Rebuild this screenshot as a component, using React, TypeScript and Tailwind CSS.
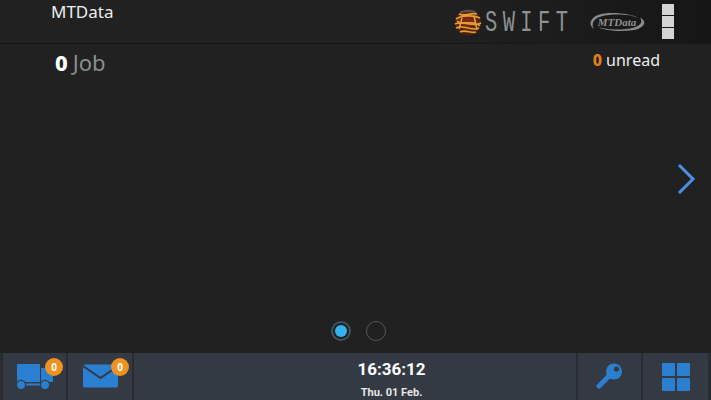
const font = { fontFamily: '"Noto Sans", "Open Sans", sans-serif' };

function Globe() {
  return (
    <svg width="28" height="27" viewBox="0 0 28 27">
      <defs>
        <radialGradient id="g" cx="50%" cy="45%" r="55%">
          <stop offset="0%" stopColor="#8c2a14" />
          <stop offset="100%" stopColor="#4a1c12" />
        </radialGradient>
      </defs>
      <circle cx="14" cy="13.5" r="13" fill="url(#g)" />
      <path d="M2 10 C8 6 20 6 26 9 M1 15 C8 11 20 19 27 14 M2 19 C9 15 19 23 25 19 M5 5 C10 8 18 3 23 5 M6 23 C11 20 18 25 22 23 M3 12 C9 17 19 10 26 17 M8 9 L5 20 M20 7 L23 21" fill="none" stroke="#e0a030" strokeWidth="1.6" />
      <path d="M6 3.5 C11 1 18 1 22 3.5" fill="none" stroke="#55524a" strokeWidth="2" />
    </svg>
  );
}

function MtLogo() {
  return (
    <div className="relative w-[58px] h-[22px] flex items-center justify-center">
      <svg width="58" height="22" viewBox="0 0 58 22" className="absolute inset-0">
        <path d="M10 4 C2 7 0 14 6 18 C3 13 5 8 13 5.5 C24 2.5 42 3 50 7 C45 3 22 0 10 4 Z" fill="#8a8a8a" />
        <path d="M50 18 C57 15 59 10 52 6.5 C55 11 53 14 46 16.5 C36 19.5 18 19 10 16 C16 20 38 21.5 50 18 Z" fill="#8a8a8a" />
      </svg>
      <span className="relative text-[11px] leading-none italic font-bold text-[#8f8f8f]" style={{ fontFamily: '"Liberation Serif", serif' }}>MTData</span>
    </div>
  );
}

function Badge() {
  return (
    <span className="absolute w-[18px] h-[18px] rounded-full bg-[#ee9220] flex items-center justify-center text-[10px] leading-none font-bold text-white">0</span>
  );
}

function Cell({ className, children }: { className: string; children: React.ReactNode }) {
  return <div className={`relative h-full bg-[#343a44] flex items-center justify-center ${className}`}>{children}</div>;
}

export default function App() {
  return (
    <div className="w-[711px] h-[400px] bg-[#212121] flex flex-col overflow-hidden" style={font}>
      <header className="h-[44px] shrink-0 border-b border-[#191919] flex bg-gradient-to-r from-[#212121] from-60% to-[#161616]">
        <div className="pl-[51px] pt-[1px] text-[17px] leading-[22px] text-[#eeeeee] w-[453px]">MTData</div>
        <div className="flex-1 flex items-start">
          <div className="mt-[9px] ml-[1px]"><Globe /></div>
          <span className="mt-[6px] ml-[3px] w-[102px] text-[30px] leading-[34px] tracking-[8px] text-[#8e9294] whitespace-nowrap" style={{ fontFamily: '"Liberation Mono", monospace', transform: 'scaleX(0.68)', transformOrigin: 'left' }}>SWIFT</span>
          <div className="mt-[11px] ml-[1px]"><MtLogo /></div>
          <div className="ml-[16px] mt-[4px] flex flex-col gap-[1px]">
            <div className="w-[12px] h-[11px] bg-[#d4d4d4]" />
            <div className="w-[12px] h-[11px] bg-[#d4d4d4]" />
            <div className="w-[12px] h-[11px] bg-[#d4d4d4]" />
          </div>
        </div>
      </header>
      <main className="flex-1 relative flex flex-col">
        <div className="flex justify-between items-start">
          <div className="pl-[55px] pt-[4px] text-[22px] leading-[28px] text-[#8d8d8d]">
            <b className="text-white font-extrabold mr-[5px]">0</b>Job
          </div>
          <div className="pr-[51px] pt-[5px] text-[16px] leading-[22px] text-[#eeeeee]">
            <b className="text-[#e07f1f] font-extrabold mr-[4px]">0</b>unread
          </div>
        </div>
        <svg className="absolute left-[675px] top-[118px]" width="22" height="34" viewBox="0 0 22 34">
          <path d="M4 3 L18 17 L4 31" fill="none" stroke="#4a90e2" strokeWidth="3" />
        </svg>
        <div className="mt-auto mb-[12px] flex justify-center gap-[15px] pl-[6px]">
          <div className="w-[20px] h-[20px] rounded-full border-2 border-[#3f5460] flex items-center justify-center">
            <div className="w-[12px] h-[12px] rounded-full bg-[#35b3ee]" />
          </div>
          <div className="w-[20px] h-[20px] rounded-full border border-[#555555]" />
        </div>
      </main>
      <footer className="h-[47px] shrink-0 bg-[#2a2c30] flex gap-[2px] px-[3px] pr-[3px]">
        <Cell className="w-[63px]">
          <svg className="mt-[1px]" width="38" height="26" viewBox="0 0 38 26" fill="#2a7fd0">
            <rect x="1" y="0" width="23" height="18" rx="1" />
            <path d="M25 4 H32 L37 10 V18 H25 Z" />
            <rect x="6" y="19.5" width="20" height="2" />
            <circle cx="5" cy="21" r="4.6" stroke="#343a44" strokeWidth="1.2" />
            <circle cx="29" cy="21" r="4.6" stroke="#343a44" strokeWidth="1.2" />
          </svg>
          <span className="absolute top-[5px] left-[42px]"><Badge /></span>
        </Cell>
        <Cell className="w-[64px]">
          <svg className="mb-[1px]" width="37" height="24" viewBox="0 0 37 24">
            <path d="M1 2 Q1 0.5 3 0.5 H34 Q36 0.5 36 2 V22 Q36 23.5 34 23.5 H3 Q1 23.5 1 22 Z" fill="#2a7fd0" />
            <path d="M1 2 L18.5 14 L36 2" fill="none" stroke="#343a44" strokeWidth="2" />
          </svg>
          <span className="absolute top-[5px] left-[43px]"><Badge /></span>
        </Cell>
        <Cell className="flex-1 flex-col pl-[73px] pt-[5px]">
          <div className="text-[17px] leading-[20px] font-bold text-white" style={{ fontFamily: '"Roboto", sans-serif' }}>16:36:12</div>
          <div className="text-[11px] leading-[14px] font-bold text-[#e8e8e8] mt-[7px]" style={{ fontFamily: '"Roboto", sans-serif' }}>Thu. 01 Feb.</div>
        </Cell>
        <Cell className="w-[63px]">
          <svg width="27" height="27" viewBox="0 0 27 27" className="mr-[1px]">
            <circle cx="18" cy="8.5" r="8" fill="#2a7fd0" />
            <path d="M12 14 L3 23" stroke="#2a7fd0" strokeWidth="5" strokeLinecap="round" fill="none" />
            <circle cx="20.5" cy="6" r="2.6" fill="#343a44" />
          </svg>
        </Cell>
        <Cell className="w-[65px]">
          <div className="grid grid-cols-2 gap-[2px] mt-[1px] ml-[1px]">
            <div className="w-[13px] h-[13px] bg-[#2a7fd0] rounded-[1px]" />
            <div className="w-[13px] h-[13px] bg-[#2a7fd0] rounded-[1px]" />
            <div className="w-[13px] h-[13px] bg-[#2a7fd0] rounded-[1px]" />
            <div className="w-[13px] h-[13px] bg-[#2a7fd0] rounded-[1px]" />
          </div>
        </Cell>
      </footer>
    </div>
  );
}
